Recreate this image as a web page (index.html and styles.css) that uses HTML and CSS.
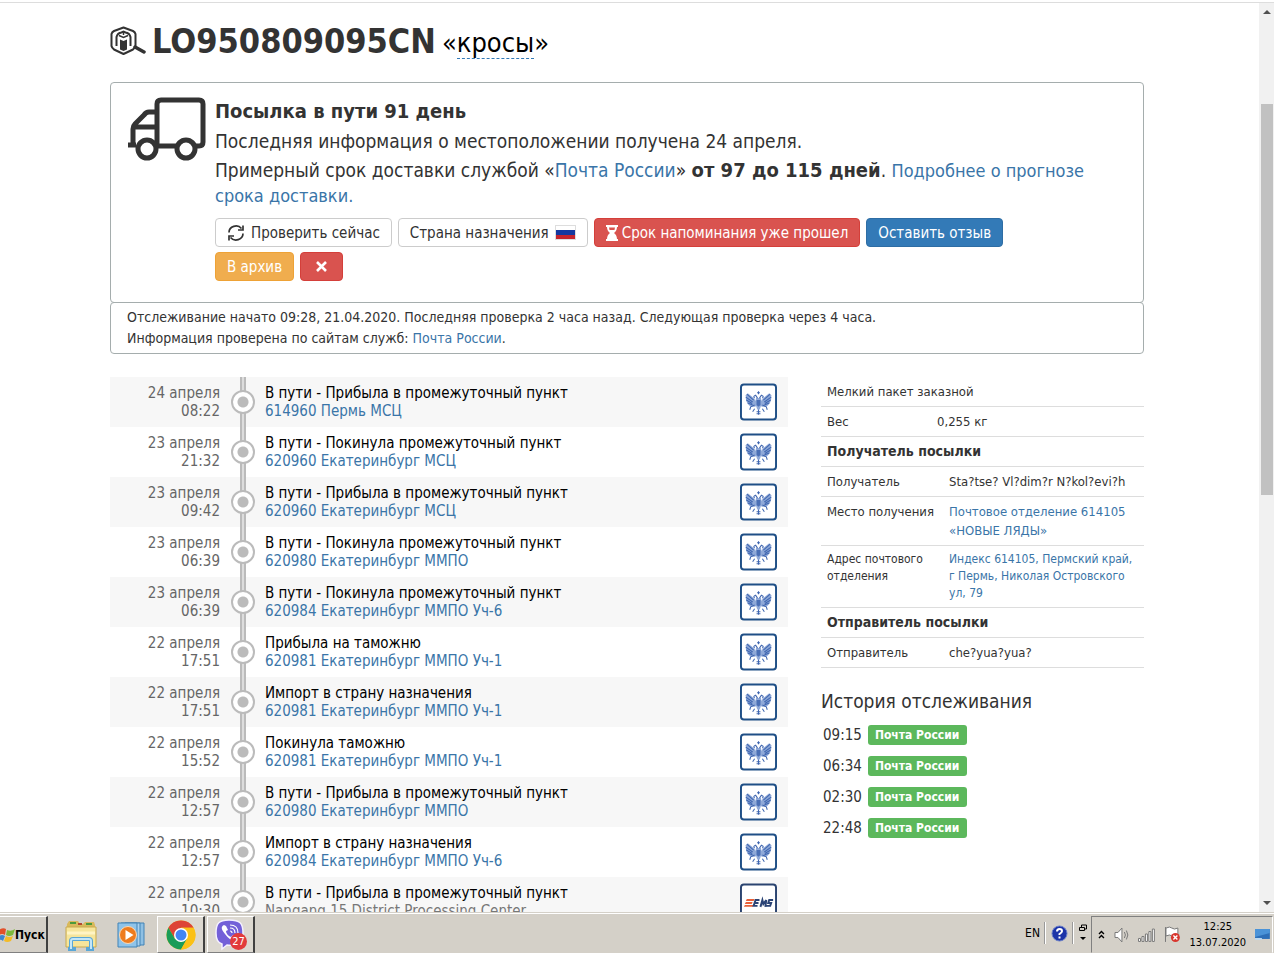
FILE: index.html
```html
<!DOCTYPE html>
<html lang="ru">
<head>
<meta charset="utf-8">
<title>LO950809095CN</title>
<link rel="stylesheet" href="styles.css">
</head>
<body>
<svg class="defs" aria-hidden="true">
  <symbol id="eagle" viewBox="0 0 38 38">
    <rect x="1" y="1" width="36" height="36" rx="3" fill="#fff" stroke="#1f4f86" stroke-width="2"/>
    <g fill="#8fa9d8">
      <path d="M17 19 L14 15 L8 10 L6 12 Q5 19 10 23 Q13 25 17 23Z"/>
      <path d="M21 19 L24 15 L30 10 L32 12 Q33 19 28 23 Q25 25 21 23Z"/>
      <path d="M16.500 15h5l1 5-2 6-1.500 2-1.500-2-2-6z"/>
    </g>
    <g fill="none" stroke="#3f66b0" stroke-width="1.100">
      <path d="M7 11l7 6M6 14l7 5M6.500 17l6 3.500M8 20l5 2M31 11l-7 6M32 14l-7 5M31.500 17l-6 3.500M30 20l-5 2"/>
      <path d="M15 15q-2-2 1-3l2 3M23 15q2-2-1-3l-2 3M19 8v3M17.500 9.500h3"/>
      <path d="M15 22l-4 2-1 3M23 22l4 2 1 3M15 26l-2 3M23 26l2 3M17 29h4M19 27v5M17 31h4"/>
    </g>
    <path d="M17 17h4v5l-2 2-2-2z" fill="#4a6fb5"/>
  </symbol>
  <symbol id="ems" viewBox="0 0 38 38">
    <rect x="1" y="1" width="36" height="36" rx="3" fill="#fff" stroke="#2b4470" stroke-width="2"/>
    <path d="M7 16h8l-1 2H6zM6 19h7l-1 2H5zM5 22h9l-1 2H4z" fill="#e8613a"/>
    <g fill="none" stroke="#2b4475" stroke-width="2">
      <path d="M20 17h-4l-2 6h4M15 20h4M21 24l2-7 1 4 3-4-1 7M34 17h-4l-1 3h3l-1 3h-4"/>
    </g>
  </symbol>
</svg>
<div class="screen">
  <div class="viewport">
    <main class="page">
      <h1 class="title">
        <svg class="title-icon" viewBox="0 0 36 30" fill="none" stroke="#333" aria-hidden="true">
          <path d="M13.500 1.500 L23 5Q25 6 25.500 8V20Q25 22 23 23.500L13.500 28L4 23.500Q2 22 1.500 20V8Q2 6 4 5Z" stroke-width="2" stroke-linejoin="round"/>
          <path d="M10 13.500l3.500 1.500 3.500-1.500v10l-3.500 1.500-3.500-1.500z" fill="#333" stroke="none"/>
          <path d="M6.500 20v-9q1-4 5-4.500l2-1 2 1q4 .5 5 4.500v9" stroke-width="2"/>
          <path d="M9 9.500l4.500 2 4.500-2M13.500 6v3" stroke-width="1.500"/>
          <path d="M25 21l9 5" stroke-width="3.500" stroke-linecap="round"/>
        </svg>
        <span class="track">LO950809095CN</span>
        <span class="alias">«<a href="#" class="alias-link">кросы</a>»</span>
      </h1>

      <section class="status">
        <svg class="truck" viewBox="0 0 80 64" fill="none" stroke="#333" stroke-width="5" stroke-linejoin="round" aria-hidden="true">
          <path d="M30 49V7q0-4 4-4h38q4 0 4 4v38q0 4-4 4h-4M50 49H30"/>
          <path d="M30 15h-8q-3 0-5 3L8 27q-2 2-2 5v14M30 30H8"/>
          <path d="M1 48h8"/>
          <circle cx="20" cy="52" r="9"/>
          <circle cx="59" cy="52" r="9"/>
        </svg>
        <div class="status-body">
          <h2 class="status-title">Посылка в пути 91 день</h2>
          <p class="status-line">Последняя информация о местоположении получена 24 апреля.</p>
          <p class="status-term">Примерный срок доставки службой «<a href="#">Почта России</a>» <b>от 97 до 115 дней</b>. <a href="#" class="more">Подробнее о прогнозе срока доставки.</a></p>
          <div class="actions">
            <button type="button" class="btn"><svg width="18" height="18" viewBox="0 0 18 18" fill="none" stroke="#333" stroke-width="1.700" aria-hidden="true"><path d="M2 8.500a7 6.500 0 0 1 12.500-4M16 1.500V6h-5M16 9.500a7 6.500 0 0 1-12.500 4M2 16.500V12h5"/></svg>Проверить сейчас</button>
            <button type="button" class="btn">Страна назначения<span class="flag"></span></button>
            <button type="button" class="btn btn-danger"><svg width="12" height="16" viewBox="0 0 12 16" aria-hidden="true"><path d="M0 0h12v2h-1c0 3-1.500 5-3 6 1.500 1 3 3 3 6h1v2H0v-2h1c0-3 1.500-5 3-6C2.500 7 1 5 1 2H0z" fill="#fff"/><path d="M3 2.500h6L8.500 5h-5z" fill="#d9534f"/></svg>Срок напоминания уже прошел</button>
            <button type="button" class="btn btn-primary">Оставить отзыв</button>
            <span class="btn-group">
              <button type="button" class="btn btn-warning">В архив</button>
              <button type="button" class="btn btn-danger btn-close" aria-label="Удалить"><svg width="11" height="11" viewBox="0 0 11 11" stroke="#fff" stroke-width="2.600" aria-hidden="true"><path d="M1 1l9 9M10 1l-9 9"/></svg></button>
            </span>
          </div>
        </div>
      </section>
      <section class="check-info">
        <p>Отслеживание начато 09:28, 21.04.2020. Последняя проверка 2 часа назад. Следующая проверка через 4 часа.</p>
        <p>Информация проверена по сайтам служб: <a href="#">Почта России</a>.</p>
      </section>

      <div class="columns">
        <ol class="timeline">
          <li class="event"><time class="when">24 апреля<br>08:22</time><span class="rail"><i class="dot"></i></span><div class="what">В пути - Прибыла в промежуточный пункт<br><a href="#">614960 Пермь МСЦ</a></div><svg class="carrier" aria-hidden="true"><use href="#eagle"/></svg></li>
          <li class="event"><time class="when">23 апреля<br>21:32</time><span class="rail"><i class="dot"></i></span><div class="what">В пути - Покинула промежуточный пункт<br><a href="#">620960 Екатеринбург МСЦ</a></div><svg class="carrier" aria-hidden="true"><use href="#eagle"/></svg></li>
          <li class="event"><time class="when">23 апреля<br>09:42</time><span class="rail"><i class="dot"></i></span><div class="what">В пути - Прибыла в промежуточный пункт<br><a href="#">620960 Екатеринбург МСЦ</a></div><svg class="carrier" aria-hidden="true"><use href="#eagle"/></svg></li>
          <li class="event"><time class="when">23 апреля<br>06:39</time><span class="rail"><i class="dot"></i></span><div class="what">В пути - Покинула промежуточный пункт<br><a href="#">620980 Екатеринбург ММПО</a></div><svg class="carrier" aria-hidden="true"><use href="#eagle"/></svg></li>
          <li class="event"><time class="when">23 апреля<br>06:39</time><span class="rail"><i class="dot"></i></span><div class="what">В пути - Покинула промежуточный пункт<br><a href="#">620984 Екатеринбург ММПО Уч-6</a></div><svg class="carrier" aria-hidden="true"><use href="#eagle"/></svg></li>
          <li class="event"><time class="when">22 апреля<br>17:51</time><span class="rail"><i class="dot"></i></span><div class="what">Прибыла на таможню<br><a href="#">620981 Екатеринбург ММПО Уч-1</a></div><svg class="carrier" aria-hidden="true"><use href="#eagle"/></svg></li>
          <li class="event"><time class="when">22 апреля<br>17:51</time><span class="rail"><i class="dot"></i></span><div class="what">Импорт в страну назначения<br><a href="#">620981 Екатеринбург ММПО Уч-1</a></div><svg class="carrier" aria-hidden="true"><use href="#eagle"/></svg></li>
          <li class="event"><time class="when">22 апреля<br>15:52</time><span class="rail"><i class="dot"></i></span><div class="what">Покинула таможню<br><a href="#">620981 Екатеринбург ММПО Уч-1</a></div><svg class="carrier" aria-hidden="true"><use href="#eagle"/></svg></li>
          <li class="event"><time class="when">22 апреля<br>12:57</time><span class="rail"><i class="dot"></i></span><div class="what">В пути - Прибыла в промежуточный пункт<br><a href="#">620980 Екатеринбург ММПО</a></div><svg class="carrier" aria-hidden="true"><use href="#eagle"/></svg></li>
          <li class="event"><time class="when">22 апреля<br>12:57</time><span class="rail"><i class="dot"></i></span><div class="what">Импорт в страну назначения<br><a href="#">620984 Екатеринбург ММПО Уч-6</a></div><svg class="carrier" aria-hidden="true"><use href="#eagle"/></svg></li>
          <li class="event"><time class="when">22 апреля<br>10:30</time><span class="rail"><i class="dot"></i></span><div class="what">В пути - Прибыла в промежуточный пункт<br><span class="muted">Nangang 15 District Processing Center</span></div><svg class="carrier" aria-hidden="true"><use href="#ems"/></svg></li>
        </ol>

        <aside class="details">
          <table class="facts">
            <colgroup><col class="col-narrow"><col></colgroup>
            <tr><td colspan="2">Мелкий пакет заказной</td></tr>
            <tr><td>Вес</td><td>0,255 кг</td></tr>
          </table>
          <table class="facts">
            <colgroup><col class="col-label"><col></colgroup>
            <tr><th colspan="2">Получатель посылки</th></tr>
            <tr><td>Получатель</td><td>Sta?tse? Vl?dim?r N?kol?evi?h</td></tr>
            <tr><td>Место получения</td><td><a href="#">Почтовое отделение 614105 «НОВЫЕ ЛЯДЫ»</a></td></tr>
            <tr class="small"><td>Адрес почтового отделения</td><td><a href="#">Индекс 614105, Пермский край, г Пермь, Николая Островского ул, 79</a></td></tr>
            <tr><th colspan="2">Отправитель посылки</th></tr>
            <tr><td>Отправитель</td><td>che?yua?yua?</td></tr>
          </table>
          <h3 class="history-title">История отслеживания</h3>
          <ul class="history">
            <li><time>09:15</time><span class="badge">Почта России</span></li>
            <li><time>06:34</time><span class="badge">Почта России</span></li>
            <li><time>02:30</time><span class="badge">Почта России</span></li>
            <li><time>22:48</time><span class="badge">Почта России</span></li>
          </ul>
        </aside>
      </div>
    </main>
    <div class="scrollbar" aria-hidden="true">
      <svg width="8" height="4" viewBox="0 0 8 4"><path d="M0 4l4-4 4 4z" fill="#505050"/></svg>
      <div class="scroll-track"><div class="scroll-thumb"></div></div>
      <svg width="8" height="4" viewBox="0 0 8 4"><path d="M0 0l4 4 4-4z" fill="#505050"/></svg>
    </div>
  </div>

  <footer class="taskbar">
    <button type="button" class="start">
      <svg width="15" height="16" viewBox="1 0 15 16" aria-hidden="true"><path d="M0 3q4-3 7-1L6 8Q3 6 0 8z" fill="#e2512a"/><path d="M8 3q4 2 8-1l-2 6q-4 2-7 0z" fill="#7cb83b"/><path d="M0 9q3-2 6 0l-2 5q-2-2-4-1z" fill="#3d86d0"/><path d="M7 9q3 2 7 0l-2 5q-4 2-7 0z" fill="#f3bb28"/></svg>Пуск</button>
    <div class="launchers">
      <button type="button" class="task" aria-label="Проводник">
        <svg width="34" height="32" viewBox="0 0 34 32"><path d="M3 5l2-3h9l2 3h3l2-2h9l1 3v20H2z" fill="#d9b95b"/><path d="M6 3h6v2H6zM22 4h6v2h-6z" fill="#4c9a3b"/><path d="M14 4h4v2h-4z" fill="#b5482f"/><path d="M2 8h30v20H2z" fill="#f6e59b" stroke="#c8a94e"/><path d="M3 14h28" stroke="#fff4c4" stroke-width="3"/><path d="M7 29v-7q0-2 2-2h16q2 0 2 2v7M4 30h8M22 30h8" fill="none" stroke="#5aa7d6" stroke-width="4"/><path d="M7 30v-8q0-2 2-2h16q2 0 2 2v8" fill="none" stroke="#c4e6f7" stroke-width="2"/></svg>
      </button>
      <button type="button" class="task" aria-label="Проигрыватель">
        <svg width="28" height="28" viewBox="0 0 28 28"><path d="M8 2h19v22H8z" fill="#8fc0e3" stroke="#4283b5"/><path d="M4 2h19v23H4z" fill="#a9d1ee" stroke="#4283b5"/><path d="M1 2h19v24H1z" fill="#8fc4ea" stroke="#4283b5"/><circle cx="11" cy="14" r="8.500" fill="#ee7c1f" stroke="#fbd9b5"/><path d="M8.500 9v10l8-5z" fill="#fff"/></svg>
      </button>
      <button type="button" class="task task-open" aria-label="Chrome">
        <svg width="30" height="30" viewBox="0 0 30 30"><circle cx="15" cy="15" r="14.500" fill="#fbc116"/><path d="M2.400 7.800A14.500 14.500 0 0 1 27.600 7.800H15L8.500 18z" fill="#dd4437"/><path d="M2.400 7.800A14.500 14.500 0 0 0 15 29.500L21.200 18.500 15 22 8.800 18.500z" fill="#1a9c58"/><path d="M15 7.800h12.600a14.500 14.500 0 0 1-12.600 21.700l6.200-11z" fill="#fbc116"/><circle cx="15" cy="15" r="7" fill="#fff"/><circle cx="15" cy="15" r="5.500" fill="#4285f4"/></svg>
      </button>
      <button type="button" class="task task-open" aria-label="Viber">
        <svg width="32" height="32" viewBox="0 0 32 32"><path d="M14 1C4 1 1 4 1 14c0 7 2 10 6 11v5l5-4c12 1 16-2 16-12S25 1 14 1z" fill="#7360d8" stroke="#f4f0ff" stroke-width="1.500"/><path d="M9 6c-4 2-2 5 1 9s6 6 9 7c3-1 4-3 2-4l-3-2-2 2c-3-1-5-4-5-6l2-1-2-4z" fill="#fff"/><path d="M15 9q5 0 5 5M15 6q8 0 8 8M15 12q2 0 2 2" fill="none" stroke="#fff" stroke-width="1.200"/></svg>
        <span class="count">27</span>
      </button>
    </div>
    <div class="lang">
      <span>EN</span>
      <span class="sep"></span>
      <svg width="17" height="17" viewBox="0 0 17 17" aria-hidden="true"><circle cx="8.500" cy="8.500" r="7.500" fill="#1c34a8" stroke="#6a7fc8"/><path d="M6 6.500q0-2.500 2.500-2.500T11 6.300Q11 7.500 8.500 9v1M8.500 11.500v2" fill="none" stroke="#fff" stroke-width="2"/></svg>
      <span class="sep"></span>
      <svg width="8" height="18" viewBox="0 0 8 18" aria-hidden="true"><path d="M2.500 3V1h5v4h-2M.5 3.500h5v3h-5z" fill="none" stroke="#000"/><path d="M1 13h6l-3 3z"/></svg>
    </div>
    <div class="tray">
      <svg width="7" height="9" viewBox="0 0 7 9" fill="none" stroke="#000" stroke-width="1.400" aria-hidden="true"><path d="M1 4l2.500-2.500L6 4M1 8l2.500-2.500L6 8"/></svg>
      <svg width="15" height="16" viewBox="0 0 15 16" fill="none" stroke="#777" aria-hidden="true"><path d="M1 5.500h3L8 1v14l-4-4.500H1z" fill="#fff"/><path d="M10.500 5q2 3 0 6M12.500 3.500q3 4.500 0 9"/></svg>
      <svg width="17" height="14" viewBox="0 0 17 14" fill="#fff" stroke="#777" aria-hidden="true"><path d="M.5 10.500h2v3h-2zM4 8.500h2v5H4zM7.500 6h2v7.500h-2zM11 3.500h2v10h-2zM14.500 1h2v12.500h-2z"/></svg>
      <svg width="17" height="17" viewBox="0 0 17 17" aria-hidden="true"><path d="M1.500 1v15M2 2q4-2 6 0t6 0v8q-4 2-6 0t-6 0z" fill="#fff" stroke="#777"/><circle cx="11.500" cy="11.500" r="4.500" fill="#d8362e"/><path d="M9.500 9.500l4 4M13.500 9.500l-4 4" stroke="#fff" stroke-width="1.400"/></svg>
      <div class="clock">12:25<br>13.07.2020</div>
      <svg width="15" height="13" viewBox="0 0 15 13" aria-hidden="true"><path d="M0 1h15v10H0z" fill="#2d6fb8"/><path d="M0 1h15v4L0 9z" fill="#4a93d8"/><path d="M0 10h7v2H0z" fill="#bcd8ef"/></svg>
    </div>
  </footer>
</div>
</body>
</html>
```
FILE: styles.css
```css
* { box-sizing: border-box; }

body {
  margin: 0;
  background: #fff;
  color: #333;
  font-family: "DejaVu Sans Condensed", "Noto Sans", sans-serif;
  font-size: 14px;
  line-height: 20px;
}

a { color: #3a75a8; text-decoration: none; }
p, h1, h2, h3, ul, ol { margin: 0; padding: 0; }
ul, ol { list-style: none; }
button { font-family: inherit; cursor: pointer; }

.defs { position: absolute; width: 0; height: 0; }

.screen { display: flex; flex-direction: column; height: 100vh; }

.viewport {
  display: flex;
  flex: 1;
  min-height: 0;
  margin-top: 2px;
  border-top: 1px solid #ddd;
  overflow: hidden;
}

.page { flex: 1; min-width: 0; padding: 16px 115px 0 110px; }

/* Title */
.title {
  display: flex;
  align-items: center;
  height: 44px;
  font-weight: normal;
  white-space: nowrap;
}
.title-icon { width: 36px; height: 30px; margin-right: 6px; }
.track { font-size: 34px; line-height: 44px; font-weight: bold; }
.alias { margin: 4px 0 0 6px; font-size: 27px; line-height: 32px; color: #000; }
.alias-link { color: #000; border-bottom: 1px dashed #337ab7; }

/* Status panel */
.status {
  display: flex;
  margin-top: 19px;
  padding: 14px 16px 21px;
  border: 1px solid #a5adad;
  border-radius: 4px;
}
.truck { flex: none; width: 80px; height: 64px; margin-right: 8px; }
.status-body { flex: 1; min-width: 0; }
.status-title { font-size: 20px; line-height: 29px; }
.status-line { font-size: 19px; line-height: 30px; }
.status-term { font-size: 19px; line-height: 24px; padding-top: 2px; }
.status-term b { font-size: 20px; }
.more { font-size: 18px; }

.actions { display: flex; flex-wrap: wrap; gap: 5px 6px; margin-top: 10px; }
.btn-group { display: flex; gap: 6px; }
.btn {
  display: inline-flex;
  align-items: center;
  gap: 6px;
  height: 29px;
  padding: 0 11px;
  border: 1px solid #ccc;
  border-radius: 4px;
  background: #fff;
  color: #333;
  font-size: 15px;
  line-height: 20px;
}
.btn-danger { gap: 4px; background: #d9534f; border-color: #d43f3a; color: #fff; }
.btn-primary { background: #337ab7; border-color: #2e6da4; color: #fff; }
.btn-warning { background: #f0ad4e; border-color: #eea236; color: #fff; }
.btn-close { padding: 0 15px; }
.flag {
  width: 21px;
  height: 15px;
  border: 1px solid #ddd;
  background: linear-gradient(#fff 33%, #1438a0 33% 66%, #c5242c 66%);
}

.check-info {
  margin-top: -1px;
  padding: 4px 16px;
  border: 1px solid #a5adad;
  border-radius: 4px;
  line-height: 21px;
}

/* Columns */
.columns { display: flex; gap: 33px; margin-top: 23px; }
.timeline { flex: 1; min-width: 0; }
.event { display: flex; align-items: center; height: 50px; padding-right: 11px; font-size: 15px; line-height: 18px; }
.event:nth-child(odd) { background: #f7f7f7; }
.when { width: 110px; color: #666; text-align: right; }
.rail {
  display: flex;
  align-items: center;
  justify-content: center;
  width: 24px;
  height: 100%;
  margin: 0 10px 0 11px;
  background: linear-gradient(90deg, transparent 9px, #bbb 9px 11px, #ddd 11px 13px, #bbb 13px 15px, transparent 15px);
}
.dot {
  width: 24px;
  height: 24px;
  border: 2px solid #bbb;
  border-radius: 50%;
  background: radial-gradient(circle, #bbb 5px, #fff 6px);
}
.what { flex: 1; color: #000; white-space: nowrap; }
.muted { color: #777; }
.carrier { width: 37px; height: 38px; }

/* Parcel details */
.details { flex: none; width: 323px; }
.facts { width: 100%; border-collapse: collapse; table-layout: fixed; line-height: 19px; }
.facts td, .facts th {
  padding: 5px 0 5px 6px;
  border-bottom: 1px solid #ddd;
  text-align: left;
  vertical-align: top;
}
.facts td { font-size: 13px; }
.col-narrow { width: 110px; }
.col-label { width: 122px; }
.facts .small td { padding-right: 6px; font-size: 12px; line-height: 17px; }
.history-title { margin: 20px 0 5px; font-size: 19px; line-height: 26px; font-weight: normal; }
.history li { display: flex; align-items: center; gap: 6px; height: 31px; padding-left: 2px; font-size: 15px; }
.badge {
  padding: 0 8px 0 7px;
  border-radius: 3px;
  background: #5cb85c;
  color: #fff;
  font-size: 12px;
  line-height: 20px;
  font-weight: bold;
}

/* Scrollbar */
.scrollbar {
  display: flex;
  flex-direction: column;
  align-items: center;
  width: 15px;
  padding: 7px 0;
  background: #f1f1f1;
}
.scroll-track { flex: 1; align-self: stretch; padding: 90px 1px 0 2px; }
.scroll-thumb { height: 49%; background: #c1c1c1; }

/* Taskbar */
.taskbar {
  display: flex;
  flex: none;
  align-items: stretch;
  height: 41px;
  padding-top: 3px;
  border-top: 1px solid #d4d0c8;
  box-shadow: inset 0 1px #fff;
  background: #d4d0c8;
  color: #000;
  font-size: 12px;
}
.start {
  display: flex;
  align-items: center;
  width: 48px;
  padding: 0;
  border: 1px solid #fff;
  border-width: 1px 2px 1px 0;
  border-color: #fff #404040 #808080 #fff;
  background: #d4d0c8;
  color: #000;
  font-size: 12px;
  font-weight: bold;
}
.launchers { display: flex; gap: 2px; margin-left: 9px; }
.task {
  position: relative;
  display: flex;
  align-items: center;
  justify-content: center;
  width: 48px;
  padding: 0;
  border: 1px solid transparent;
  border-right-width: 2px;
  background: none;
}
.task-open { border-color: #fff #404040 #808080 #fff; background: #dcd8d0; }
.count {
  position: absolute;
  right: 6px;
  bottom: 2px;
  width: 17px;
  height: 17px;
  border-radius: 50%;
  background: #e23b3b;
  color: #fff;
  font-size: 11px;
  line-height: 17px;
}
.lang { display: flex; align-items: center; gap: 5px; margin-left: auto; padding-bottom: 3px; }
.sep { width: 1px; height: 22px; background: #fff; box-shadow: -1px 0 #999; }
.tray {
  display: flex;
  align-items: center;
  gap: 9px;
  width: 182px;
  margin: 0 1px 0 4px;
  padding: 0 2px 0 6px;
  border: 1px solid #808080;
  border-color: #808080 #fff #d4d0c8 #808080;
}
.clock { flex: 1; text-align: center; font-size: 11px; line-height: 16px; white-space: nowrap; }
```
